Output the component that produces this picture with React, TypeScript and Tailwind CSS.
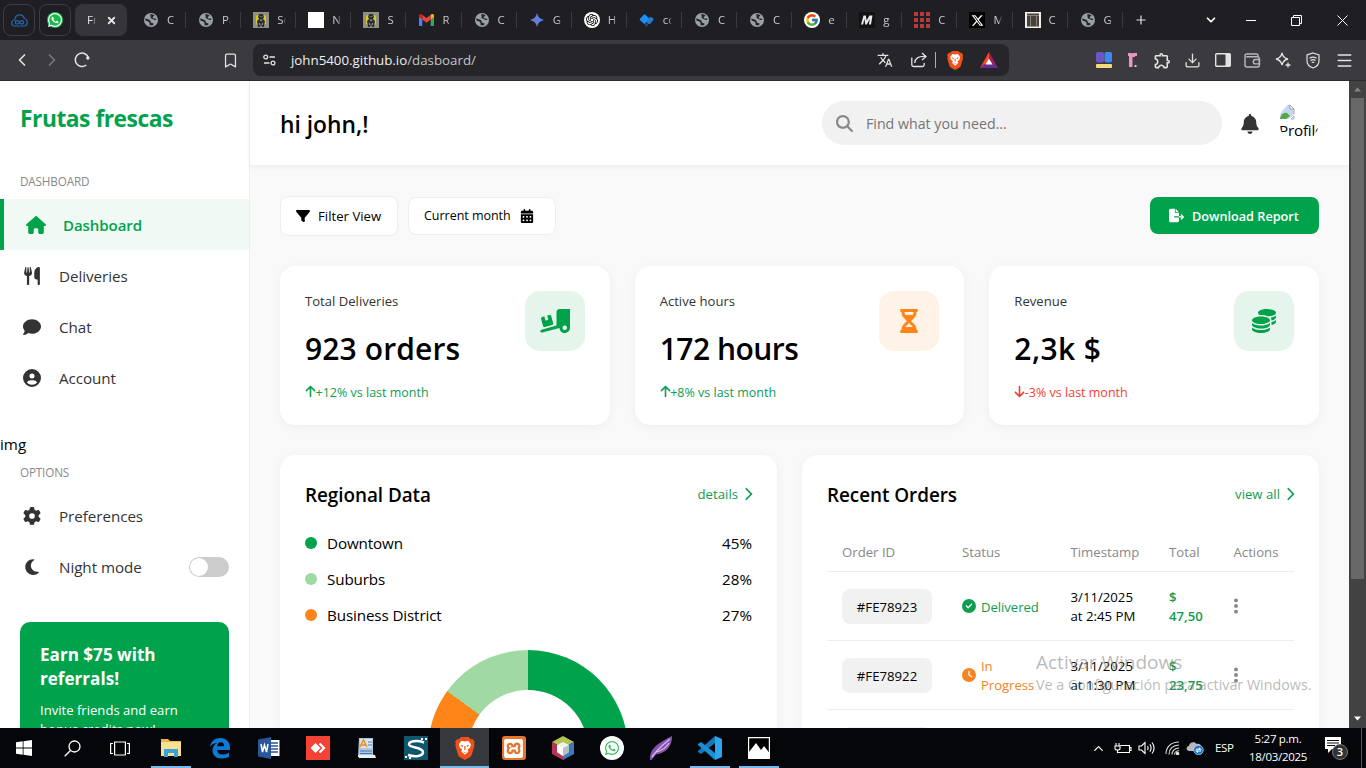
import React from "react";
import {
  FaHouse, FaUtensils, FaComment, FaCircleUser, FaGear, FaMoon, FaFilter, FaCalendarDays, FaTruckRampBox,
  FaHourglassHalf, FaCoins, FaArrowUp, FaArrowDown, FaChevronRight, FaCircleCheck, FaClock, FaEllipsisVertical,
  FaBell, FaMagnifyingGlass, FaFileExport, FaWhatsapp, FaXTwitter,
} from "react-icons/fa6";
import { FcGoogle } from "react-icons/fc";
import { SiOpenai, SiXampp } from "react-icons/si";
import { MdTranslate, MdOutlineExtension } from "react-icons/md";
import { Bookmark, ChevronLeft, ChevronRight, ChevronDown, ChevronUp, X, Plus, Menu, Download } from "lucide-react";

/* ---------- Browser chrome ---------- */

const Globe = () => (
  <svg width="14" height="14" viewBox="0 0 14 14">
    <circle cx="7" cy="7" r="7" fill="#9aa0a6" />
    <path d="M1.600 5C3 6.800 4.600 6 6 7.200c1.200 1 .2 1.900 1.300 2.500.9.500 2.300.2 2.400 1.500-.8 1-2.400 1.400-3.900 1.100-.5-1.600.2-2.400-1.200-3.600C3.300 7.700 1.800 8.200 1.300 7zM6 1.400c1.500-.3 3.300.1 4.600 1.200-.3 1-1.500.7-1.800 1.600-.4 1.100.9 1.300 2.200 1.200.7 0 1.200.3 1.500.9-.3.9-1.500 1-2.400.4C8.800 5.900 7.200 6 6.600 4.800 6.200 3.800 7.300 3.200 6 1.400z" fill="#26262a" />
  </svg>
);

const Figure = () => (
  <svg width="16" height="16" viewBox="0 0 16 16">
    <rect width="16" height="16" fill="#8f8f86" />
    <rect x="3" y="3" width="10" height="10" rx="2" fill="#e0c818" />
    <path d="M6 2h4l1 3-1 2 2 2-1 6H9l-1-3-1 3H5L4 9l2-2-1-2z" fill="#2a3038" />
    <path d="M6.800 4h.9v1h-.9zM8.500 4h.9v1h-.9zM7 7.500h2v1.500H7zM6 11h1v2H6zM9 11h1v2H9z" fill="#8f9089" />
  </svg>
);

const Gmail = () => (
  <svg width="15" height="12" viewBox="0 0 15 12">
    <path d="M0 2v9c0 .6.4 1 1 1h2.300V5z" fill="#4285f4" />
    <path d="M15 2v9c0 .6-.4 1-1 1h-2.300V5z" fill="#34a853" />
    <path d="M11.700 1v4.500L15 3V1.800C15 .2 13.200-.5 12 .6z" fill="#fbbc04" />
    <path d="M3.300 1v4.500L0 3V1.800C0 .2 1.800-.5 3 .6z" fill="#c5221f" />
    <path d="M3.300 5.500V.8l4.200 3.300L11.700.8v4.700L7.500 8.800z" fill="#ea4335" />
  </svg>
);

const Gemini = () => (
  <svg width="14" height="14" viewBox="0 0 14 14">
    <defs><linearGradient id="gem"><stop stopColor="#8a72c8" /><stop offset="1" stopColor="#3f8cf0" /></linearGradient></defs>
    <path d="M7 0c.9 4 3 6.100 7 7-4 .9-6.100 3-7 7-.9-4-3-6.100-7-7 4-.9 6.100-3 7-7z" fill="url(#gem)" />
  </svg>
);

const Gpt = () => (
  <span className="flex h-4 w-4 items-center justify-center rounded-full bg-white text-black"><SiOpenai size={12} /></span>
);

const Diamonds = () => (
  <svg width="15" height="13" viewBox="0 0 15 13">
    <rect x="2" y="1.300" width="7" height="7.500" rx="1" transform="rotate(42 5.500 5)" fill="#1f8ff2" />
    <rect x="9" y="3" width="4.200" height="7" rx="1" transform="rotate(38 11 6.500)" fill="#1f7fd6" />
    <circle cx="7.500" cy="10.800" r="1.700" fill="#144f8c" />
  </svg>
);

const GoogleDot = () => (
  <span className="flex h-4 w-4 items-center justify-center rounded-full bg-white"><FcGoogle size={14} /></span>
);

const MLogo = () => (
  <svg width="16" height="16" viewBox="0 0 16 16">
    <rect width="16" height="16" fill="#121214" />
    <path d="M2 12.500L4.500 3.500h2.300l.8 5 2.800-5h3.100l-1.500 9H9.900l.9-5.500-3 5.500H6.300L5.400 7l-1.300 5.500z" fill="#e8e8e8" />
  </svg>
);

const RedGrid = () => (
  <svg width="16" height="16" viewBox="0 0 16 16" fill="#b53a3c">
    {[0, 6, 12].map((y) => [0, 6, 12].map((x) => <rect key={`${x}-${y}`} x={x} y={y} width="4" height="4" />))}
  </svg>
);

const XLogo = () => (
  <span className="flex h-4 w-4 items-center justify-center bg-black text-white"><FaXTwitter size={13} /></span>
);

const Cabinet = () => (
  <svg width="16" height="16" viewBox="0 0 16 16">
    <rect width="16" height="16" fill="#f3f0e8" />
    <rect x="2" y="1.500" width="12" height="13" fill="#46413c" />
    <path d="M2 3.500h12M5.500 4v10.500M11.500 4v10.500" stroke="#a9a298" strokeWidth=".7" />
  </svg>
);

const tabs: [React.ReactNode, string][] = [
  [<Globe />, "C"], [<Globe />, "Pa"], [<Figure />, "Sc"], [<span className="h-4 w-4 bg-white" />, "N"], [<Figure />, "S"],
  [<Gmail />, "R"], [<Globe />, "C"], [<Gemini />, "G"], [<Gpt />, "H"], [<Diamonds />, "cc"], [<Globe />, "C"],
  [<Globe />, "C"], [<GoogleDot />, "e"], [<MLogo />, "g"], [<RedGrid />, "C"], [<XLogo />, "M"], [<Cabinet />, "C"], [<Globe />, "G"],
];

function TabStrip() {
  return (
    <div className="flex h-10 shrink-0 items-center bg-[#1f1f23] pl-[3px] text-[#e4e4e7]">
      <div className="flex h-8 w-8 items-center justify-center rounded-lg border border-[#3c3c42]">
        <svg width="17" height="13" viewBox="0 0 17 13" fill="none" stroke="#2369ae" strokeWidth="1.200">
          <path d="M4 12C1.800 12 .7 10.600.7 9c0-1.800 1.200-3 3-3C4 2.500 6 .8 8.700.8c2.400 0 4 1.400 4.500 3.700 2 .2 3 1.700 3 3.800 0 2.200-1.200 3.700-3.500 3.700z" />
          <path d="M8.500 8.300c-1.500-2.600-4.200-2-4.200 0s2.700 2.600 4.200 0c1.500-2.600 4.200-2 4.200 0s-2.700 2.600-4.200 0z" />
        </svg>
      </div>
      <div className="ml-1 flex h-8 w-8 items-center justify-center rounded-lg border border-[#3c3c42]">
        <span className="flex h-4 w-4 items-center justify-center rounded-full bg-[#18b84b] text-white"><FaWhatsapp size={16} /></span>
      </div>
      <div className="ml-1 flex h-8 w-[52px] items-center rounded-lg bg-[#35353a] pl-3 text-[11.500px]">
        <span className="w-[9px] overflow-hidden mask-r-from-60% whitespace-nowrap">Fr</span>
        <X size={11} strokeWidth={4} className="ml-[10px]" />
      </div>
      <div className="ml-[4px] flex">
        {tabs.map(([icon, t], i) => (
          <div key={i} className="flex w-[55.100px] items-center">
            <span className="ml-[12px] flex w-4 shrink-0 items-center justify-center">{icon}</span>
            <span className="ml-2 w-[9px] overflow-hidden mask-r-from-60% text-[11.500px] whitespace-nowrap text-[#c9c9ce]">{t}</span>
            <span className="ml-auto h-4 w-px bg-[#3a3a40]" />
          </div>
        ))}
      </div>
      <Plus size={14} className="ml-[11px]" />
      <ChevronDown size={14} strokeWidth={3} className="ml-[56px] text-white" />
      <span className="ml-[28px] h-px w-[10px] bg-white" />
      <svg className="ml-[35px] text-white" width="11" height="11" viewBox="0 0 11 11" fill="none" stroke="currentColor">
        <path d="M.5 2.500h8v8h-8zM2.500 2.500v-2h8v8h-2" />
      </svg>
      <svg className="ml-[35px] text-white" width="11" height="11" viewBox="0 0 11 11" stroke="currentColor">
        <path d="M.5.5l10 10M10.500.5l-10 10" />
      </svg>
    </div>
  );
}

function BraveMark({ size }: { size: number }) {
  return (
    <svg width={size * 0.86} height={size} viewBox="0 0 18 21">
      <path d="M5.500 0h7l2 2 1.500-.2L18 4.500l-.7 1.500.4 2-2.500 8.500c-.3 1-1 1.600-1.800 2.100L9 21l-4.400-2.400c-.8-.5-1.500-1.100-1.800-2.100L.3 8l.4-2L0 4.500l2-2.700 1.500.2z" fill="#f1501b" />
      <path d="M9 4l3-.6 2.500 3.200-.8 3.200-2.200 1.500.8 2-3.300 3-3.300-3 .8-2-2.200-1.500-.8-3.200L6 3.400z" fill="#fff" />
      <path d="M5 7l2.500.8-.8 1.500zM13 7l-2.500.8.8 1.500zM8.300 8.500h1.400l-.3 3.500h-.8zM7 13.500l2 .8 2-.8-2 .2z" fill="#f1501b" />
    </svg>
  );
}

function Toolbar() {
  return (
    <div className="flex h-[41px] shrink-0 items-center border-b border-[#2c2a2c] bg-[#3b3b3f] pl-[12px] text-[#e3e3e6]">
      <ChevronLeft size={20} />
      <ChevronRight size={20} className="ml-[10px] text-[#77777c]" />
      <svg className="ml-[12px]" width="16" height="16" viewBox="0 0 16 16" fill="none" stroke="currentColor" strokeWidth="1.500">
        <path d="M12.300 13A6.700 6.700 0 1 1 14.500 6" />
        <circle cx="13.800" cy="6" r="1.700" fill="currentColor" stroke="none" />
      </svg>
      <Bookmark size={17} strokeWidth={1.800} className="ml-[132px]" />
      <div className="ml-[14px] flex h-8 w-[756px] items-center rounded-lg bg-[#25252a] pl-[10px]">
        <svg width="13" height="12" viewBox="0 0 13 12" fill="none" stroke="currentColor" strokeWidth="1.300">
          <circle cx="2.700" cy="3" r="1.900" /><path d="M6.500 3H12M1 9h5.500" /><circle cx="10" cy="9" r="1.900" />
        </svg>
        <span className="ml-[15px] pt-[2px] text-[13.300px] text-[#f0f0f2]">john5400.github.io<span className="text-[#c4c4c8]">/dasboard/</span></span>
        <MdTranslate size={16} className="ml-auto" />
        <svg className="ml-[18px]" width="16" height="16" viewBox="0 0 16 16" fill="none" stroke="currentColor" strokeWidth="1.300">
          <path d="M.8 5.500v7.300c0 1 .7 1.700 1.700 1.700h9c1 0 1.700-.7 1.700-1.700V11" />
          <path d="M3.800 11C4 6.500 7 4 14.500 4.500M11 1l4 3.500-4 3.600" />
        </svg>
        <span className="ml-[8px] h-4 w-px bg-[#b0b0b4]" />
        <span className="ml-[11px] flex"><BraveMark size={19} /></span>
        <svg className="mr-[11px] ml-[17px]" width="18" height="16" viewBox="0 0 18 16">
          <path d="M9 0L0 16h9z" fill="#ff4724" /><path d="M9 0l9 16h-6L9 6z" fill="#9e1f63" /><path d="M0 16h18l-4.500-4H4z" fill="#662d91" /><path d="M9 6.500l3.500 6h-7z" fill="#fff" />
        </svg>
      </div>
      <div className="ml-[86px] flex w-[258px] items-center justify-between">
        <svg width="18" height="18" viewBox="0 0 18 18">
          <rect x="1" y="1" width="8" height="10.500" rx="2" fill="#6c55c4" /><rect x="9.500" y="1" width="7.500" height="10.500" rx="2" fill="#4285f4" /><rect x="1" y="13" width="16" height="4" rx="1" fill="#f4dc78" />
        </svg>
        <svg width="12" height="16" viewBox="0 0 12 16">
          <path d="M1 1h4v1l1-1h4v3H8v1H5.500v10H2V4H1z" fill="#e995c5" /><path d="M7.500 13h2v2h-2z" fill="#f5b8da" />
        </svg>
        <MdOutlineExtension size={19} className="-mr-[2px]" />
        <Download size={17} strokeWidth={1.800} />
        <svg width="16" height="14" viewBox="0 0 16 14"><rect x=".7" y=".7" width="14.600" height="12.600" rx="1" fill="none" stroke="currentColor" strokeWidth="1.400" /><rect x="10.500" y="1" width="4.500" height="12" fill="currentColor" /></svg>
        <svg width="17" height="15" viewBox="0 0 17 15" fill="none" stroke="#b9b9bd" strokeWidth="1.400">
          <path d="M1 3v9c0 1.100.9 2 2 2h10.500c1 0 1.800-.7 1.800-1.800V5.500c0-1-.8-1.700-1.800-1.700H2.200M1 3c0-1.200.8-2 2-2h9.500c.9 0 1.500.6 1.500 1.500v1.300" /><path d="M15.500 6.500h-4a2.200 2.200 0 0 0 0 4.400h4z" />
        </svg>
        <svg width="16" height="16" viewBox="0 0 16 16" fill="none" stroke="currentColor" strokeWidth="1.300">
          <path d="M7 .8c.8 4 2.200 5.400 6 6.200-3.800.8-5.200 2.200-6 6.200C6.200 9.200 4.800 7.800 1 7c3.800-.8 5.200-2.200 6-6.200zM13 10.500v5M10.500 13h5" />
        </svg>
        <svg width="16" height="17" viewBox="0 0 16 17" fill="none" stroke="currentColor" strokeWidth="1.200">
          <path d="M8 1l6 2v6c0 3.500-2.500 5.800-6 7-3.500-1.200-6-3.500-6-7V3z" /><path d="M4.500 6.300c2.200-1.500 4.800-1.500 7 0M5.500 8.500c1.700-1.100 3.300-1.100 5 0M6.700 10.500c.9-.5 1.700-.5 2.600 0" />
        </svg>
        <Menu size={19} strokeWidth={1.700} className="-mr-px" />
      </div>
    </div>
  );
}

/* ---------- Sidebar ---------- */

function NavItem({ icon, label, active, children }: { icon: React.ReactNode; label: string; active?: boolean; children?: React.ReactNode }) {
  return (
    <div
      className={
        active
          ? "flex h-[51px] items-center border-l-4 border-[#00a34b] bg-[#f0f9f4] pl-5 text-[15px] font-semibold text-[#00a34b]"
          : "flex h-[51px] items-center px-5 text-[15.200px] text-[#333]"
      }
    >
      <span className={active ? "flex w-6 justify-center text-[20px]" : "flex w-6 justify-center text-[18px]"}>{icon}</span>
      <span className="ml-[15px] pt-[2px] tracking-[-0.05px]">{label}</span>
      {children}
    </div>
  );
}

function Sidebar() {
  return (
    <aside className="flex w-[250px] shrink-0 flex-col border-r border-[#eeeeee] bg-white">
      <h1 className="mt-[22px] h-8 pl-5 text-[22.800px] leading-8 font-bold tracking-[-0.48px] text-[#00a34b]">Frutas frescas</h1>
      <p className="mt-[38px] h-4 pl-5 text-[11.700px] leading-4 tracking-[-0.15px] text-[#888]">DASHBOARD</p>
      <nav className="mt-[10px]">
        <NavItem active icon={<FaHouse />} label="Dashboard" />
        <NavItem icon={<FaUtensils />} label="Deliveries" />
        <NavItem icon={<FaComment />} label="Chat" />
        <NavItem icon={<FaCircleUser />} label="Account" />
      </nav>
      <p className="mt-[30px] h-[22px] text-[15.200px] leading-[22px] text-black">img</p>
      <p className="mt-[9px] h-4 pl-5 text-[11.700px] leading-4 tracking-[-0.15px] text-[#888]">OPTIONS</p>
      <nav className="mt-[10px]">
        <NavItem icon={<FaGear />} label="Preferences" />
        <NavItem icon={<FaMoon />} label="Night mode">
          <span className="ml-auto flex h-5 w-10 items-center rounded-full bg-[#ccc] pl-px">
            <span className="h-[18px] w-[18px] rounded-full bg-white" />
          </span>
        </NavItem>
      </nav>
      <div className="mx-5 mt-[30px] h-40 shrink-0 rounded-[10px] bg-[#00a34b] px-5 pt-[21px] text-white">
        <p className="text-[17.100px] leading-6 font-bold">Earn $75 with<br />referrals!</p>
        <p className="mt-[10px] text-[13.100px] leading-[19px]">Invite friends and earn<br />bonus credits now!</p>
      </div>
    </aside>
  );
}

/* ---------- Main content ---------- */

function Header() {
  return (
    <header className="flex h-[84px] shrink-0 items-center bg-white px-[30px] shadow-[0_2px_5px_rgba(0,0,0,0.05)]">
      <h2 className="pt-[5px] text-[22.800px] font-semibold text-black">hi john,!</h2>
      <div className="ml-auto flex h-11 w-[400px] items-center rounded-full bg-[#f1f1f1] pl-[14px]">
        <FaMagnifyingGlass size={17} className="text-[#888]" />
        <span className="ml-[13px] pt-px text-[14.200px] text-[#757575]">Find what you need...</span>
      </div>
      <FaBell size={20} className="mt-[2px] ml-[18px] text-[#333]" />
      <div className="-mt-[3px] ml-[19px] h-10 w-10 overflow-hidden rounded-full pt-[2px] leading-none">
        <svg width="16" height="16" viewBox="0 0 16 16">
          <path d="M1 1h10l4 4v6L9 15H1z" fill="#c6d5f0" /><path d="M11 1v4h4z" fill="#fff" stroke="#8a8a8a" strokeWidth=".7" />
          <path d="M1 15c1-5 4-7 7-6l3 3-4 3z" fill="#53a93f" /><path d="M1 1h10M15 5v5M12 15h3v-3z" stroke="#a0a0a0" strokeWidth=".8" fill="none" />
        </svg>
        <span className="block text-[15.200px] leading-[20px] tracking-[-0.2px] whitespace-nowrap text-black">Profile</span>
      </div>
    </header>
  );
}

type Stat = { label: string; value: string; tracking: string; note: string; up: boolean; orange?: boolean; icon: React.ReactNode };
const stats: Stat[] = [
  { label: "Total Deliveries", value: "923 orders", tracking: "tracking-[0.13px]", note: "+12% vs last month", up: true, icon: <FaTruckRampBox size={30} /> },
  { label: "Active hours", value: "172 hours", tracking: "tracking-[-0.5px]", note: "+8% vs last month", up: true, orange: true, icon: <FaHourglassHalf size={24} /> },
  { label: "Revenue", value: "2,3k $", tracking: "tracking-[0.4px]", note: "-3% vs last month", up: false, icon: <FaCoins size={24} /> },
];

function StatCard({ s }: { s: Stat }) {
  return (
    <div className="flex h-[159px] justify-between rounded-[15px] bg-white p-[25px] shadow-[0_2px_10px_rgba(0,0,0,0.05)]">
      <div>
        <p className="text-[13.100px] leading-[20px] text-[#333]">{s.label}</p>
        <p className={`mt-[16px] text-[30px] leading-[43px] font-semibold text-black ${s.tracking}`}>{s.value}</p>
        <p className={s.up ? "mt-[13px] -ml-px flex items-center text-[12.500px] leading-5 text-[#0f9d4f]" : "mt-[13px] -ml-px flex items-center text-[12.500px] leading-5 text-[#ee3e36]"}>
          {s.up ? <FaArrowUp size={13} className="-mr-[1.500px] mb-[3px]" /> : <FaArrowDown size={13} className="-mr-[1.500px] mb-[3px]" />}
          {s.note}
        </p>
      </div>
      <div className={s.orange ? "flex h-[60px] w-[60px] items-center justify-center rounded-[15px] bg-[#fff2e6] text-[#ff8519]" : "flex h-[60px] w-[60px] items-center justify-center rounded-[15px] bg-[#e5f5eb] text-[#00a34b]"}>
        {s.icon}
      </div>
    </div>
  );
}

function PanelHead({ title, link }: { title: string; link: string }) {
  return (
    <div className="flex h-[30px] items-center justify-between">
      <h3 className="text-[18.900px] font-semibold tracking-[-0.05px] text-black">{title}</h3>
      <span className="flex items-center gap-[3px] text-[13.200px] text-[#0f9d4f]">{link}<FaChevronRight size={14} className="-mr-[3px] mb-[2px]" /></span>
    </div>
  );
}

const regions = [
  { name: "Downtown", pct: "45%", dot: "bg-[#00a34b]" },
  { name: "Suburbs", pct: "28%", dot: "bg-[#a1d9a3]" },
  { name: "Business District", pct: "27%", dot: "bg-[#ff8519]" },
];

function RegionalData() {
  return (
    <section className="w-[497px] shrink-0 rounded-[15px] bg-white p-[25px] shadow-[0_2px_10px_rgba(0,0,0,0.05)]">
      <PanelHead title="Regional Data" link="details" />
      <div className="mt-[15px]">
        {regions.map((r) => (
          <div key={r.name} className="flex h-9 items-center text-[15.200px] text-black">
            <span className={`h-3 w-3 rounded-full ${r.dot}`} />
            <span className="ml-[10px] tracking-[-0.12px]">{r.name}</span>
            <span className="ml-auto">{r.pct}</span>
          </div>
        ))}
      </div>
      <div className="mt-[17px] ml-[123px] flex h-[200px] w-[200px] items-center justify-center rounded-full bg-[conic-gradient(#00a34b_0_60%,#ff8519_60%_85%,#a1d9a3_85%_100%)]">
        <span className="h-[120px] w-[120px] rounded-full bg-white" />
      </div>
    </section>
  );
}

const orders = [
  { id: "#FE78923", done: true, status: "Delivered", time: "at 2:45 PM", total: "47,50" },
  { id: "#FE78922", done: false, status: "In Progress", time: "at 1:30 PM", total: "23,75" },
  { id: "#FE78921", done: true, status: "Delivered", time: "at 12:15 PM", total: "36,20" },
];

function RecentOrders() {
  return (
    <section className="min-w-0 flex-1 rounded-[15px] bg-white p-[25px] shadow-[0_2px_10px_rgba(0,0,0,0.05)]">
      <PanelHead title="Recent Orders" link="view all" />
      <div className="mt-[23px] grid h-[39px] grid-cols-[120px_108.500px_98.500px_64.500px_1fr] items-center border-b border-[#eee] pt-[2px] pl-[15px] text-[13.200px] text-[#888]">
        <span>Order ID</span><span>Status</span><span>Timestamp</span><span>Total</span><span>Actions</span>
      </div>
      {orders.map((o) => (
        <div key={o.id} className="grid h-[69px] grid-cols-[120px_108.500px_98.500px_64.500px_1fr] items-center border-b border-[#eee] pl-[15px] text-[13.200px] leading-[19px] text-black">
          <span className="flex h-[35px] w-[90px] items-center justify-center rounded-lg bg-[#f1f1f1] pt-[2px]">{o.id}</span>
          <span className={o.done ? "flex items-center gap-[5px] text-[#0f9d4f]" : "flex items-center gap-[5px] text-[#f58424]"}>
            {o.done ? <FaCircleCheck size={14} className="shrink-0" /> : <FaClock size={14} className="shrink-0" />}
            <span className="w-[60px] pt-[2px] tracking-[-0.08px]">{o.status}</span>
          </span>
          <span className="pt-[2px]">3/11/2025<br />{o.time}</span>
          <span className="pt-[2px] font-semibold text-[#0f9d4f]">$<br />{o.total}</span>
          <FaEllipsisVertical size={18} className="-ml-[7px] text-[#888]" />
        </div>
      ))}
    </section>
  );
}

function Dashboard() {
  return (
    <div className="flex min-w-0 flex-1 flex-col bg-[#f9f9f9]">
      <Header />
      <main className="px-[30px] pt-[30px]">
        <div className="flex h-[41px] items-center">
          <button className="flex h-10 w-[118px] items-center rounded-lg border border-[#eee] bg-white pl-[15px] text-[13.200px] text-black">
            <FaFilter size={14} /><span className="ml-2 pt-[2px]">Filter View</span>
          </button>
          <button className="ml-[10px] flex h-[38px] w-[148px] items-center rounded-lg border border-[#eee] bg-white pl-[15px] text-[12.500px] text-black">
            <span className="pt-[2px] tracking-[-0.03px]">Current month</span><FaCalendarDays size={14} className="ml-[9px]" />
          </button>
          <button className="ml-auto flex h-[37px] w-[169px] items-center rounded-lg bg-[#00a34b] pl-[19px] text-[12.700px] font-semibold text-white">
            <FaFileExport size={15} /><span className="ml-2 pt-[3px]">Download Report</span>
          </button>
        </div>
        <div className="mt-[30px] grid grid-cols-3 gap-[25px]">
          {stats.map((s) => <StatCard key={s.label} s={s} />)}
        </div>
        <div className="mt-[30px] flex gap-[25px]">
          <RegionalData />
          <RecentOrders />
        </div>
      </main>
    </div>
  );
}

function Scrollbar() {
  return (
    <div className="flex w-[17px] shrink-0 flex-col items-center bg-[#424242]">
      <svg className="mt-[6px]" width="7" height="5" viewBox="0 0 7 5"><path d="M0 4.500L3.500.5 7 4.500z" fill="#868686" /></svg>
      <span className="mt-[6px] h-[481px] w-[13px] bg-[#686868]" />
      <svg className="mt-auto mb-[7px]" width="7" height="5" viewBox="0 0 7 5"><path d="M0 .5h7L3.500 4.500z" fill="#fff" /></svg>
    </div>
  );
}

/* ---------- Taskbar ---------- */

function VsMark() {
  return (
    <svg width="24" height="24" viewBox="0 0 24 24">
      <path d="M17 0v7L3 18l-3-2V15z" fill="#1279bd" /><path d="M17 24v-7L3 6 0 8v1z" fill="#1b8fd6" /><path d="M17 0l7 3v18l-7 3z" fill="#2aa5ee" />
    </svg>
  );
}

const apps: { icon: React.ReactNode; mark?: "line" | "active" }[] = [
  { mark: "line", icon: (
    <svg width="22" height="20" viewBox="0 0 22 20"><path d="M1 1h7l2 2h11v14H1z" fill="#e6b84c" /><path d="M1 4h20v14H1z" fill="#fbe08e" /><path d="M4 11h14v8h-4v-4H8v4H4z" fill="#35a5de" /></svg>) },
  { icon: (
    <svg width="22" height="22" viewBox="0 0 22 22"><path d="M1 10C2 4 6 1 11.500 1 17 1 21 5 21 10.500V13H8c.3 3 2.500 4.500 5.500 4.500 2.500 0 4.500-.6 6.500-1.800v4.100C18 21 15.500 21.500 12.500 21.500 7 21.500 3.500 18 3.500 13.500c0-3.500 2-6.500 5-7.800C5 6 2.500 7.500 1 10zm7.200-.8h7C15 6.500 14 5.200 12 5.200c-2.200 0-3.500 1.500-3.800 4z" fill="#0b7bd8" /></svg>) },
  { icon: (
    <svg width="22" height="22" viewBox="0 0 22 22"><path d="M11 3h10.500v16H11z" fill="#fff" /><path d="M13 6h7M13 9h7M13 12h7M13 15h7" stroke="#2b579a" strokeWidth="1.400" /><path d="M0 2.500L13 0v22L0 19.500z" fill="#2b579a" /><path d="M3 7l1.500 8L6.500 8l2 7L10 7" stroke="#fff" strokeWidth="1.500" fill="none" /></svg>) },
  { icon: (
    <svg width="24" height="24" viewBox="0 0 24 24"><path d="M0 0h24v24H0z" fill="#f44336" /><path d="M9.500 7l5 5-5 5-5-5z" fill="#fff" /><path d="M13.500 7.500l4.500 4.500-4.500 4.500" stroke="#fff" strokeWidth="2.200" fill="none" /></svg>) },
  { icon: (
    <svg width="19" height="22" viewBox="0 0 19 22"><path d="M2 1h14v16l2 3H1z" fill="#a9c6e2" /><path d="M3 2h12v9H3z" fill="#d6e5f2" /><path d="M3 10L6.500 3 10 10M4.500 8h4" stroke="#f08a24" strokeWidth="1.500" fill="none" /><path d="M11 5h4M11 8h4M3 14h12M3 16.500h12" stroke="#47709a" strokeWidth=".9" /><path d="M1 18h17l1 3H2z" fill="#e9f0f7" /></svg>) },
  { icon: (
    <svg width="24" height="24" viewBox="0 0 24 24"><path d="M0 0h24v24H0z" fill="#10566f" /><path d="M20 6.500C13 4 4.500 5 5 8.500c.8 3.500 14 2.500 14 7.500 0 4.500-8 5-15 3" stroke="#fff" strokeWidth="2.500" fill="none" /><path d="M17 2h2v2h-2zM21 2h2v2h-2zM1 20h2v2H1zM5 21h2v2H5z" fill="#fff" /></svg>) },
  { mark: "active", icon: <BraveMark size={23} /> },
  { icon: <span className="flex h-6 w-6 items-center justify-center rounded-[3px] bg-[#e8762a] text-white"><SiXampp size={19} /></span> },
  { icon: (
    <svg width="22" height="24" viewBox="0 0 22 24"><path d="M11 0l11 6-11 6L0 6z" fill="#b1c64e" /><path d="M0 6l11 6v12L0 18z" fill="#b93355" /><path d="M22 6l-11 6v12l11-6z" fill="#3b79bd" /><path d="M11 6l6 3v7l-6 4-6-4V9z" fill="#eef2ee" /><path d="M5 9l6 3v8l-6-4z" fill="#fff" /><path d="M11 12l6-3v7l-6 4z" fill="#b6c0c0" /></svg>) },
  { icon: <span className="flex h-6 w-6 items-center justify-center rounded-full bg-white text-[#32bd5c]"><FaWhatsapp size={16} /></span> },
  { icon: (
    <svg width="22" height="24" viewBox="0 0 22 24"><path d="M0 24C-1 13 8 7 22 0c.5 9-5 17-16 18.500L1.500 24z" fill="#8353ab" /><path d="M2 21C8 12 14 8 20 3M6 16c5-1 10-4 13-9" stroke="#d6b5e8" strokeWidth="1.400" fill="none" /></svg>) },
  { mark: "line", icon: <VsMark /> },
  { mark: "line", icon: (
    <svg width="22" height="22" viewBox="0 0 22 22"><path d="M.6.6h20.800v20.800H.6z" fill="#000" stroke="#fff" strokeWidth="1.200" /><path d="M1 15l7-9 5 7 3-4 5.500 7v5H1z" fill="#fff" /></svg>) },
];

function Taskbar() {
  return (
    <footer className="flex h-10 shrink-0 items-center bg-[#04060a] text-white">
      <div className="flex w-12 justify-center">
        <svg width="16" height="16" viewBox="0 0 16 16" fill="#fff"><path d="M0 2.300L6.700 1.300v6.300H0zM7.500 1.200L16 0v7.600H7.500zM0 8.400h6.700v6.300L0 13.700zM7.500 8.400H16V16l-8.500-1.200z" /></svg>
      </div>
      <div className="flex w-12 justify-center">
        <svg width="17" height="17" viewBox="0 0 17 17" fill="none" stroke="#fff" strokeWidth="1.300"><circle cx="10.500" cy="6.500" r="5.500" /><path d="M6.500 10.500L.7 16.300" /></svg>
      </div>
      <div className="flex w-[50px] justify-center pr-[2px]">
        <svg width="20" height="15" viewBox="0 0 20 15" fill="none" stroke="#fff" strokeWidth="1.200"><path d="M4.600 1h10.800v13H4.600zM3 2.500H.6v10H3M17 2.500h2.400v10H17" /></svg>
      </div>
      {apps.map((a, i) => (
        <div key={i} className={a.mark === "active" ? "flex h-10 w-[49.050px] flex-col items-center justify-between bg-[#36393d]" : "flex h-10 w-[49.050px] flex-col items-center justify-between"}>
          <span className="flex flex-1 items-center pt-[2px]">{a.icon}</span>
          <span className={a.mark === "active" ? "h-[2px] w-full bg-[#76b9ed]" : a.mark ? "h-[2px] w-10 bg-[#76b9ed]" : "h-[2px]"} />
        </div>
      ))}
      <div className="ml-auto flex items-center">
        <ChevronUp size={15} strokeWidth={2} />
        <svg className="ml-[8px]" width="18" height="13" viewBox="0 0 18 13" fill="none" stroke="#fff" strokeWidth="1.100"><path d="M6.500 3.500h9v7h-9M15.500 5.500H17v3h-1.500M2 1v3M5 1v3M1 4h5v2.500c0 1-1 1.500-2.500 1.500S1 7.500 1 6.500zM3.500 8v2.500h3" /></svg>
        <svg className="ml-[6px]" width="18" height="14" viewBox="0 0 18 14" fill="none" stroke="#fff" strokeWidth="1.100"><path d="M1 5h2.500L7 1.500v11L3.500 9H1zM9.500 5c.8 1.300.8 2.700 0 4M11.800 3.300c1.700 2.400 1.700 5 0 7.400M14 1.500c2.700 3.500 2.700 7.500 0 11" /></svg>
        <svg className="ml-[9px]" width="15" height="14" viewBox="0 0 15 14" fill="none" stroke="#ddd" strokeWidth="1.100"><path d="M1 13C1 6 6 1 14 1M4 13.500C4 8 8 4 14 4M7 13.500C7 10 10 7 14 7" /><path d="M9.500 13.500c0-2 2-3.700 4.500-3.700" /><circle cx="12.500" cy="12.500" r="1.300" fill="#fff" /></svg>
        <svg className="ml-[6px]" width="18" height="14" viewBox="0 0 18 14"><path d="M3.500 10C-.5 10 0 5 3 5 3 1 9 0 10.500 3 14 2 16 5 15 8l-5 2z" fill="#b9b9b9" /><circle cx="12.500" cy="9" r="4.800" fill="#1c76c4" stroke="#dfe9f3" strokeWidth=".6" /><path d="M10 8.300h4.500l-1.500-1.500M15 10h-4.500l1.500 1.500" stroke="#fff" strokeWidth="1.100" fill="none" /></svg>
        <span className="ml-[11px] w-[20px] text-[11.500px] tracking-[-0.4px]">ESP</span>
        <div className="ml-[12px] flex w-[62px] flex-col items-center text-[11.500px] leading-[18px] tracking-[-0.3px] whitespace-nowrap">
          <span>5:27 p.m.</span><span>18/03/2025</span>
        </div>
        <div className="relative mr-[11px] ml-[15px] h-6 w-[26px]">
          <svg width="18" height="18" viewBox="0 0 18 18"><path d="M1 1h16v12H8l-4 4v-4H1z" fill="#fff" /><path d="M3 4.500h12M3 7h12M3 9.500h8" stroke="#111" /></svg>
          <span className="absolute top-[8px] left-[8px] flex h-4 w-4 items-center justify-center rounded-full border border-[#777] bg-[#333] text-[11px] font-semibold">3</span>
        </div>
        <span className="h-10 w-px bg-[#555]" />
        <span className="w-[4px]" />
      </div>
    </footer>
  );
}

export default function App() {
  return (
    <div className="relative flex h-[768px] w-[1366px] flex-col overflow-hidden bg-white font-['Open_Sans','Noto_Sans',sans-serif]">
      <TabStrip />
      <Toolbar />
      <div className="flex min-h-0 flex-1 overflow-hidden">
        <Sidebar />
        <Dashboard />
        <Scrollbar />
      </div>
      <Taskbar />
      <div className="pointer-events-none absolute top-[649px] left-[1036px] whitespace-nowrap text-[#8a8a8a]/60">
        <p className="text-[19px] leading-[26px]">Activar Windows</p>
        <p className="text-[14.300px] leading-[20px]">Ve a Configuración para activar Windows.</p>
      </div>
    </div>
  );
}
